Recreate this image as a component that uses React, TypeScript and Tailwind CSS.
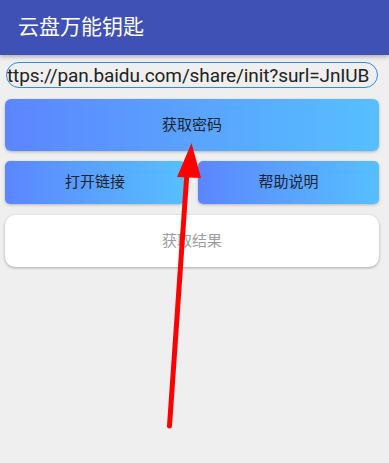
export default function App() {
  return (
    <div
      className="relative w-[389px] h-[463px] overflow-hidden bg-[#efefef]"
      style={{ fontFamily: 'Roboto, "Noto Sans CJK SC", sans-serif' }}
    >
      <div className="h-[55px] bg-[#3f51b5] flex items-center pl-[18px] shadow-[0_2px_4px_rgba(0,0,0,0.25)]">
        <span className="text-white text-[21px] leading-none">云盘万能钥匙</span>
      </div>

      <div className="px-[5px] pt-[7px]">
        <div className="h-[26px] ml-px mr-[6px] rounded-full border border-[#2f8be6] overflow-hidden flex items-center">
          <span className="whitespace-nowrap text-[19px] tracking-[-0.1px] text-[#222] leading-none">
            ttps://pan.baidu.com/share/init?surl=JnIUB
          </span>
        </div>

        <button className="mt-[11px] w-[374px] h-[52px] rounded-[6px] bg-gradient-to-r from-[#5b85ff] to-[#56bfff] shadow-[0_1px_3px_rgba(0,0,0,0.25)] text-[15px] text-[#1a2433]">
          获取密码
        </button>

        <div className="mt-[10px] flex gap-[13px] w-[374px]">
          <button className="w-[180px] h-[43px] rounded-[5px] bg-gradient-to-r from-[#5b85ff] to-[#56bfff] shadow-[0_1px_3px_rgba(0,0,0,0.25)] text-[15px] text-[#1a2433]">
            打开链接
          </button>
          <button className="flex-1 h-[43px] rounded-[5px] bg-gradient-to-r from-[#5b85ff] to-[#56bfff] shadow-[0_1px_3px_rgba(0,0,0,0.25)] text-[15px] text-[#1a2433]">
            帮助说明
          </button>
        </div>

        <div className="mt-[11px] w-[374px] h-[52px] rounded-[10px] bg-white shadow-[0_1px_3px_rgba(0,0,0,0.3)] flex items-center justify-center">
          <span className="text-[15px] text-[#9e9e9e]">获取结果</span>
        </div>
      </div>

      <svg className="absolute left-0 top-0" width="389" height="463" viewBox="0 0 389 463">
        <line x1="169.5" y1="426" x2="187" y2="172" stroke="#ff0000" strokeWidth="5" strokeLinecap="round" />
        <polygon points="191.5,143 177,177 201,178" fill="#ff0000" />
      </svg>
    </div>
  )
}
